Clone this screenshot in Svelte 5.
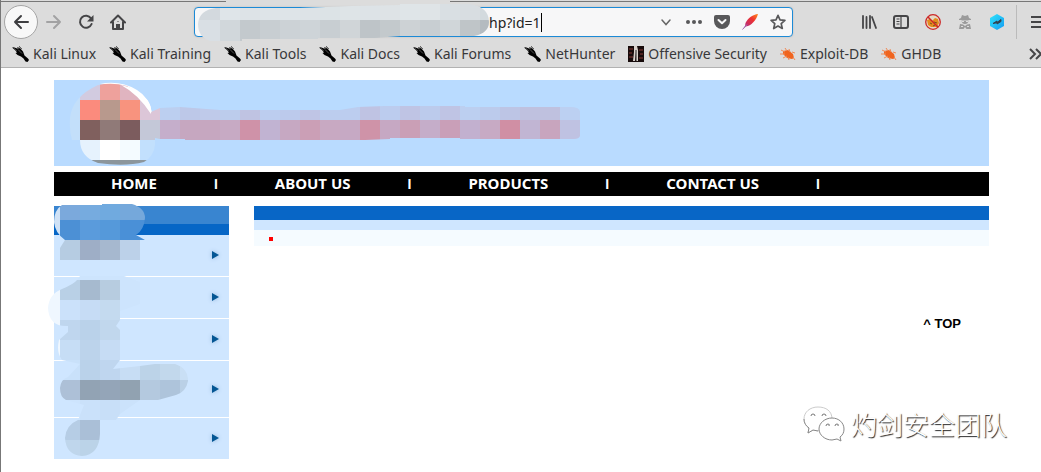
<script>
  const bookmarks = [
    ['Kali Linux', 'dragon'],
    ['Kali Training', 'dragon'],
    ['Kali Tools', 'dragon'],
    ['Kali Docs', 'dragon'],
    ['Kali Forums', 'dragon'],
    ['NetHunter', 'dragon'],
    ['Offensive Security', 'offsec'],
    ['Exploit-DB', 'bug'],
    ['GHDB', 'bug']
  ];
  const links = ['HOME', 'ABOUT US', 'PRODUCTS', 'CONTACT US'];
  const entries = ['', '', '', 'tall', 'last'];

  const row = (x, y, h, colours) =>
    colours.split(' ').map((c, i) => ({ x: x + i * 20, y, h, c: '#' + c }));

  const addressCells = [
    ...row(180, 0, 20, 'd3dbe1 d3d9de dfe5e9 dde3e7 dee4e8 dee4e8 dde3e7 dce3e6 dee4e7 dde3e7 dee3e6 dfe5e8 dfe4e7 d9dfe3 d8dde1 d3dade'),
    ...row(180, 20, 24, 'd9dfe4 d9dfe4 d1d7db c3c9cd c8ced2 ccd2d6 ced4d8 c8ced2 d0d5d8 bec4c8 c3c9cc cdd2d5 c8ced2 d0d6d9 bfc5c8 b4bbc0')
  ];
  const headCells = [
    ...row(60, 80, 20, 'c5dffa d2cbe0 eea19c e0b4c0 e0b4c0'),
    ...row(60, 100, 20, 'c3dffa fb8b7d b8998d f8937e dcc6d8'),
    ...row(60, 120, 20, 'c3dffa 80605e 907a78 7c5c5e c4c8d8'),
    ...row(60, 140, 20, 'c3dffa e6f2fd ffffff f4fbff c2e0fd'),
    ...row(60, 160, 8, '8c969c 8c969c 8c969c 8c969c 8c969c')
  ];
  const titleCells = [
    ...row(140, 100, 20, 'dcc6d8 bccff0 bdc8e8 bfcaea bcccec bfc3e2 bccdef bccaec bfc5e5 bccdee bccdef bfc3e3 bcccee bfc4e4 bccbec bfc4e4 bccff0 bccbec bdc5e5 bfc1df bfc1df bcd0f2'),
    ...row(140, 120, 20, 'c4c8d8 c5aecb c6a7c0 c6a7c0 c7aac4 cf92a8 c1b3d2 c6a8c2 cb9fb6 c8a9c2 c6a9c4 cf93a8 c6a8c3 ca9fb6 c5adc9 c99fb8 c2b0cf c7aac4 d08fa4 c1b5d3 c8a5be bfc2e2')
  ];
  const menuCells = [
    ...row(40, 200, 20, 'd0e2f6 7ba9dc 76abdf 70aadf 75a8db 75a8db'),
    ...row(40, 220, 20, 'd0e2f6 4c90d5 5a9bdc 5599da 4a90d7 4a90d7'),
    ...row(60, 240, 20, 'b6cce2 9eaec6 a6b8cf bcd1e9'),
    ...row(60, 260, 20, 'cde4fd cde4fd cde4fd cde4fd'),
    ...row(40, 280, 20, 'eff7ff b9d0e6 a6bacf b7cce0 cde4fd'),
    ...row(40, 300, 20, 'eff7ff cbe1fa c6dcf5 c4daef cde4fd'),
    ...row(40, 320, 20, 'eff7ff bfd6ee bad2ea c1d7ed'),
    ...row(40, 340, 20, 'eff7ff c6ddf5 bcd3eb c6dcf4'),
    ...row(60, 360, 20, 'c9e1fa bad2ea bfd6ef c7ddf4 bcd3e8 c2d8ec c9dff5'),
    ...row(60, 380, 20, 'adc0d7 92a3b4 94a5b8 91a2b1 b4c9df aec4db bad0e6'),
    ...row(60, 400, 20, 'cde4fd cae1fa c8dff8 cbe2fb'),
    ...row(60, 420, 20, 'b6cde5 aabfd7'),
    ...row(60, 440, 20, 'bfd6ec bbd3e8')
  ];
</script>

{#snippet cells(list)}
  {#each list as r}
    <rect x={r.x} y={r.y} width="20" height={r.h} fill={r.c} shape-rendering="crispEdges" />
  {/each}
{/snippet}

<div class="page">
  <header class="chrome">
    <div class="tabline"><i></i><b></b><i class="rest"></i></div>
    <div class="toolbar">
      <button class="back" aria-label="Back">
        <svg width="16" height="16" viewBox="0 0 16 16"><path d="M15 8H2M8 2L2 8l6 6" fill="none" stroke="#3e3e40" stroke-width="2" stroke-linecap="round" stroke-linejoin="round" /></svg>
      </button>
      <button class="tool" aria-label="Forward">
        <svg width="16" height="16" viewBox="0 0 16 16"><path d="M1 8h13M8 2l6 6-6 6" fill="none" stroke="#a2a2a3" stroke-width="2" stroke-linecap="round" stroke-linejoin="round" /></svg>
      </button>
      <button class="tool" aria-label="Reload">
        <svg width="16" height="16" viewBox="0 0 16 16"><path d="M13 4.400A6 6 0 1 0 13.600 10" fill="none" stroke="#454547" stroke-width="2" stroke-linecap="round" /><path d="M15.500 1v6.600H9z" fill="#454547" /></svg>
      </button>
      <button class="tool" aria-label="Home">
        <svg width="16" height="16" viewBox="0 0 16 16"><path d="M1 8.500L8 1.500l7 7M3 8v7h10V8" fill="none" stroke="#454547" stroke-width="2" stroke-linecap="round" stroke-linejoin="round" /><path d="M6 15v-5h4v5z" fill="#454547" /><path d="M7.500 7h1v1h-1z" fill="#454547" /></svg>
      </button>

      <div class="address">
        <svg class="mosaic" width="310" height="44" viewBox="190 0 310 44" aria-hidden="true">
          <clipPath id="c-address"><path d="M216 8H300L352 6L400 5V4H470Q489 7 489 22Q489 33 474 36H400L375 38H318V39H242V41H210Q198 37 198 24Q199 10 216 8Z" /></clipPath>
          <g clip-path="url(#c-address)">{@render cells(addressCells)}</g>
        </svg>
        <input aria-label="Address" value="hp?id=1" />
        <span class="caret"></span>
        <span class="fill"></span>
        <button class="mini" aria-label="History"><svg width="16" height="16" viewBox="0 0 16 16"><path d="M4 6l4 4.500 4-4.500" fill="none" stroke="#666" stroke-width="1.500" stroke-linecap="round" /></svg></button>
        <button class="mini" aria-label="Page actions"><svg width="16" height="16" viewBox="0 0 16 16" fill="#58585a"><circle cx="2" cy="8" r="2" /><circle cx="8" cy="8" r="2" /><circle cx="14" cy="8" r="2" /></svg></button>
        <button class="mini" aria-label="Pocket"><svg width="16" height="16" viewBox="0 0 16 16"><path d="M2 1h12q2 0 2 2v4a8 8 0 0 1-16 0V3q0-2 2-2z" fill="#58585a" /><path d="M4.500 6L8 9.300 11.500 6" fill="none" stroke="#f7f7f8" stroke-width="2" stroke-linecap="round" stroke-linejoin="round" /></svg></button>
        <button class="mini" aria-label="Feather"><svg width="16" height="16" viewBox="0 0 16 16"><defs><linearGradient id="feather" x1="1" y1="0" x2="0" y2="1"><stop offset="0" stop-color="#ff8a1c" /><stop offset=".35" stop-color="#ee3330" /><stop offset=".7" stop-color="#c52b68" /><stop offset="1" stop-color="#8153bd" /></linearGradient></defs><path d="M16 0C11 .5 6 4 3.500 9L3 12 .5 15.500 4 12.500C9 12 14.500 6 16 0z" fill="url(#feather)" /><path d="M.5 15.500L5 10.500" stroke="#a774b9" /></svg></button>
        <button class="mini" aria-label="Bookmark page"><svg width="16" height="16" viewBox="0 0 16 16"><path d="M8 1.300l2 4.500 4.900.5-3.700 3.300 1.100 4.900L8 12l-4.300 2.500 1.100-4.900L1.100 6.300 6 5.800z" fill="none" stroke="#58585a" stroke-width="1.700" stroke-linejoin="round" /></svg></button>
      </div>

      <button class="tool" aria-label="Library"><svg width="16" height="16" viewBox="0 0 16 16"><path d="M2 2v12M5.500 3v11M9 2v12M11 3l4 11" fill="none" stroke="#454547" stroke-width="1.800" stroke-linecap="round" /></svg></button>
      <button class="tool" aria-label="Sidebar"><svg width="16" height="16" viewBox="0 0 16 16"><rect x="1" y="2" width="14" height="12" rx="2" fill="none" stroke="#454547" stroke-width="2" /><path d="M8 2v12M3.500 5h3M3.500 7.500h3M3.500 10h3" stroke="#454547" stroke-width="1.200" /></svg></button>
      <button class="tool" aria-label="Block cookies"><svg width="16" height="16" viewBox="0 0 16 16"><circle cx="8" cy="8" r="7.300" fill="#e5d9c5" /><path d="M2 6l3-1 2 2 3-3 3 1 1 4-2 4H6l-3-2z" fill="#e48b1e" /><path d="M5 9l2 1M9 8l3 1M8 12l2-1" stroke="#76501f" /><circle cx="8" cy="8" r="7.300" fill="none" stroke="#cc2727" stroke-width="1.300" /><path d="M3 3l10 10" stroke="#cc2727" stroke-width="1.500" /></svg></button>
      <button class="tool" aria-label="Private agent"><svg width="16" height="16" viewBox="0 0 16 16" fill="#9b9b9b"><path d="M5 1l3 1 3-1 1 3 2 1v1H2V5l2-1zM4.500 6.500h7Q11 10 8 10T4.500 6.500zM3 10l3 .5 2 1.500 2-1.500 3-.5 1 5H9.500L8 13l-1.500 2H2z" /><path d="M5 7h2v1H5zM9 7h2v1H9zM4 12h2v1H4zM10 12h2v1h-2z" fill="#ddd" /></svg></button>
      <button class="tool" aria-label="Proxy"><svg width="16" height="16" viewBox="0 0 16 16"><defs><linearGradient id="hex" x2="1" y2="1"><stop offset="0" stop-color="#2fe4fb" /><stop offset="1" stop-color="#159bf2" /></linearGradient></defs><path d="M8 0l7 4v8l-7 4-7-4V4z" fill="url(#hex)" /><path d="M4 9.500L8 7v1.500L12 5.500v2L8 10V8.700z" fill="#324451" stroke="#324451" /></svg></button>
      <span class="rule"></span>
      <button class="menu" aria-label="Menu"><svg width="11" height="16" viewBox="0 0 11 16"><path d="M1 3h10M1 8h10M1 13h10" stroke="#454547" stroke-width="2" /></svg></button>
    </div>

    <nav class="bookmarks" aria-label="Bookmarks">
      {#each bookmarks as [name, icon]}
        <a href="#top">
          {#if icon === 'dragon'}
            <svg width="17" height="17" viewBox="0 0 17 17"><path d="M0 1.500L2.500 1.500 5 2.500 8 2l3 3.500 1.500 4L16 12.500l1 1.500-1.500 2-2-.5-2-3L9 10.500 5.500 9 3.500 7l1.500-.5-2-2.500z" fill="#000" /><path d="M5 1.500L8 2M7 0l3 3M1 1l4 4" fill="none" stroke="#444" stroke-width=".8" /><path d="M6 3.500l4 4" stroke="#aaa" stroke-width=".5" /></svg>
          {:else if icon === 'offsec'}
            <svg width="16" height="16" viewBox="0 0 16 16"><path d="M0 0h16v16H0z" fill="#170b0b" /><path d="M1 3h4M1 7h3M1 11h4M11 4h4M12 8h3M11 12h4" stroke="#632b28" stroke-width="1.500" /><path d="M6 0h3l1 4v11H8V6L7 15H5l1-9z" fill="#d9d1cb" /><path d="M8 4v11" stroke="#222" /></svg>
          {:else}
            <svg width="16" height="16" viewBox="0 0 16 16"><path d="M3 5l5-1 5 4 1 4-2 1-5-1-4-4z" fill="#f0641e" /><path d="M1 4l4 2M5 2l2 3M0 8h5M3 12l4-2M9 3l1 3M12 6l3 1M13 11l2 3M8 11l1 3" stroke="#ef8a56" stroke-width="1" /></svg>
          {/if}
          <span>{name}</span>
        </a>
      {/each}
      <button class="more" aria-label="More bookmarks"><svg width="12" height="14" viewBox="0 0 12 14"><path d="M1 2l5 5-5 5M7 2l5 5-5 5" fill="none" stroke="#454547" stroke-width="2" /></svg></button>
    </nav>
  </header>

  <main id="top">
    <div class="banner">
      <svg class="logo" width="530" height="86" viewBox="60 80 530 86" aria-hidden="true">
        <clipPath id="c-head"><path d="M98 85Q112 82 127 86Q143 95 151 112L160 108V139L155 138V145Q154 156 144 162Q125 167 98 163Q80 157 80 140H72Q69 130 70 118Q72 97 98 85Z" /></clipPath>
        <clipPath id="c-title"><path d="M160 108L180 107L220 110L340 110L358 107L385 106H465V107H570Q580 107 580 112V136Q579 139 574 139H460V138H390V139L365 140H185V139H160Z" /></clipPath>
        <path d="M100 84Q120 80 137 90Q150 98 152 113L148 114Q137 94 122 86Z" fill="#fff" />
        <g clip-path="url(#c-head)">{@render cells(headCells)}</g>
        <path d="M121 85Q138 88 148 101Q152 107 151 114Q138 94 121 85Z" fill="#fff" />
        <g clip-path="url(#c-title)">{@render cells(titleCells)}</g>
      </svg>
    </div>

    <nav class="links" aria-label="Site">
      {#each links as link}
        <a href="#top">{link}</a><span>I</span>
      {/each}
    </nav>

    <div class="columns">
      <aside>
        <div class="heading"></div>
        {#each entries as kind}
          <a href="#top" class="entry {kind}" aria-label="Category">
            <svg width="8" height="8" viewBox="0 0 8 8"><path d="M1 0l7 4-7 4z" fill="#045694" /></svg>
          </a>
        {/each}
        <svg class="smudge" width="160" height="260" viewBox="40 200 160 260" aria-hidden="true">
          <clipPath id="c-menu">
            <path d="M62 205H102V204H132Q145 208 145 218Q144 230 136 235L145 240H140V260H60V248L65 240Q55 233 54 222Q54 210 62 205Z" />
            <path d="M80 276H124L140 282V304L120 311V320L116 326L120 330V360L113 369L140 366L155 364H175Q188 368 188 381Q186 392 176 395L158 400H140L120 414L116 420H100V434Q99 455 82 456Q66 455 65 438Q66 425 78 420L84 405L66 400Q60 397 60 388Q61 379 68 377L80 364L62 360Q56 352 59 340L68 332V326Q49 327 48 308Q49 294 62 289Q74 284 77 280Z" />
          </clipPath>
          <g clip-path="url(#c-menu)">{@render cells(menuCells)}</g>
        </svg>
      </aside>
      <section>
        <div class="bar"></div>
        <div class="band"></div>
        <div class="body"><i></i></div>
        <a class="top" href="#top">^ TOP</a>
      </section>
    </div>
  </main>

  <div class="mark">
    <svg width="42" height="36" viewBox="0 0 42 36">
      <g fill="#fff" stroke-width="1">
        <path d="M15 1C7 1 1 6 1 13c0 4 2 7 5 9l-1 5 5-3c11 3 19-3 19-11S23 1 15 1z" stroke="#ccc" />
        <path d="M1 13c0 4 2 7 5 9l-1 5 5-3 5 1" stroke="#888" />
        <path d="M29 12c-7 0-13 5-13 11s6 11 13 11l5-1 4 2-1-4c3-2 4-5 4-8 0-6-5-11-12-11z" stroke="#888" />
      </g>
      <g fill="none" stroke="#777"><path d="M8 10q0-2 2-2t2 2M19 10q0-2 2-2t2 2M23 20q0-2 2-2t1 2M32 20q0-2 2-2t1 2" /></g>
    </svg>
    <span>灼剑安全团队</span>
  </div>
</div>

<style>
  :global(body) { margin: 0; background: #fff; }
  .page { position: relative; overflow: hidden; min-height: 100vh; box-sizing: border-box; border-left: 1px solid #777; font-family: "Noto Sans", "Open Sans", sans-serif; }
  svg { display: block; flex: none; }
  button { border: 0; padding: 0; background: none; display: flex; align-items: center; justify-content: center; flex: none; }
  a { color: inherit; text-decoration: none; }

  .chrome { background: #dcdcdc; border-bottom: 1px solid #b2b2b2; color: #38383a; }
  .tabline { display: flex; height: 2px; }
  .tabline i { width: 225px; border-bottom: 1px solid #777; }
  .tabline b { width: 224px; }
  .tabline .rest { flex: 1; }
  .toolbar { display: flex; align-items: center; height: 40px; padding-left: 3px; }
  .back { width: 34px; height: 34px; box-sizing: border-box; border: 1px solid #a5a5a5; border-radius: 50%; background: #f8f8f8; }
  .tool { width: 32px; height: 32px; }
  .address { position: relative; flex: 1; min-width: 0; display: flex; align-items: center; height: 30px; box-sizing: border-box; margin: 0 60px; padding-left: 294px; border: 1px solid #1c8ad6; border-radius: 4px; background: #f7f7f8; box-shadow: 0 0 2px #bbb; }
  .mosaic { position: absolute; left: -5px; top: -8px; }
  input { field-sizing: content; border: 0; padding: 0; margin: 0; background: none; outline: 0; font: 14px "Noto Sans", sans-serif; color: #222; }
  .caret { width: 1px; height: 19px; background: #000; }
  .fill { flex: 1; }
  .mini { width: 28px; height: 28px; }
  .rule { width: 1px; height: 34px; margin-left: 3px; background: #bbb; }
  .menu { width: 24px; height: 32px; justify-content: flex-end; }
  .bookmarks { display: flex; align-items: center; gap: 13px; height: 24px; padding: 0 0 1px 11px; font-size: 14px; line-height: 20px; }
  .bookmarks a { display: flex; align-items: center; gap: 4px; white-space: nowrap; }
  .more { margin-left: auto; }

  main { padding: 12px 52px 12px 53px; }
  .banner { height: 86px; background: #b9dbff; }
  .logo { margin-left: 6px; }
  .links { display: flex; align-items: center; gap: 57px; height: 24px; margin-top: 6px; padding-left: 57px; background: #000; color: #fff; font-size: 15px; font-weight: 700; line-height: 22px; white-space: nowrap; }
  .links a { margin-bottom: 2px; }
  .links span { font-family: "Liberation Sans", Arial, sans-serif; font-size: 14px; }
  .columns { display: flex; gap: 25px; align-items: flex-start; margin-top: 10px; }
  aside { position: relative; width: 175px; flex: none; }
  .heading { height: 11px; border-top: 18px solid #3985d0; background: #0666c6; }
  .entry { display: flex; align-items: center; justify-content: flex-end; height: 41px; padding-right: 10px; border-bottom: 1px solid #fff; background: #cfe6ff; }
  .entry svg { margin-bottom: 1px; filter: drop-shadow(0 0 2px #8fb4d8); }
  .tall { height: 56px; }
  .last { border-bottom: 0; }
  .smudge { position: absolute; left: -14px; top: -6px; }
  section { flex: 1; min-width: 0; display: flex; flex-direction: column; }
  .bar { height: 14px; background: #0866c6; }
  .band { height: 10px; background: #cfe6ff; }
  .body { display: flex; align-items: center; height: 16px; padding-left: 15px; background: #f5fbff; }
  .body i { width: 4px; height: 4px; margin-top: 2px; background: #f00; }
  .top { align-self: flex-end; margin: 70px 28px 0 0; font: bold 13px/16px "Liberation Sans", Arial, sans-serif; color: #000; }
  .mark { position: absolute; right: 34px; bottom: 28px; display: flex; align-items: center; gap: 6px; font: 300 26px/40px "Noto Sans CJK SC", sans-serif; color: #fff; text-shadow: 1px 1px 1px #222; }
</style>
